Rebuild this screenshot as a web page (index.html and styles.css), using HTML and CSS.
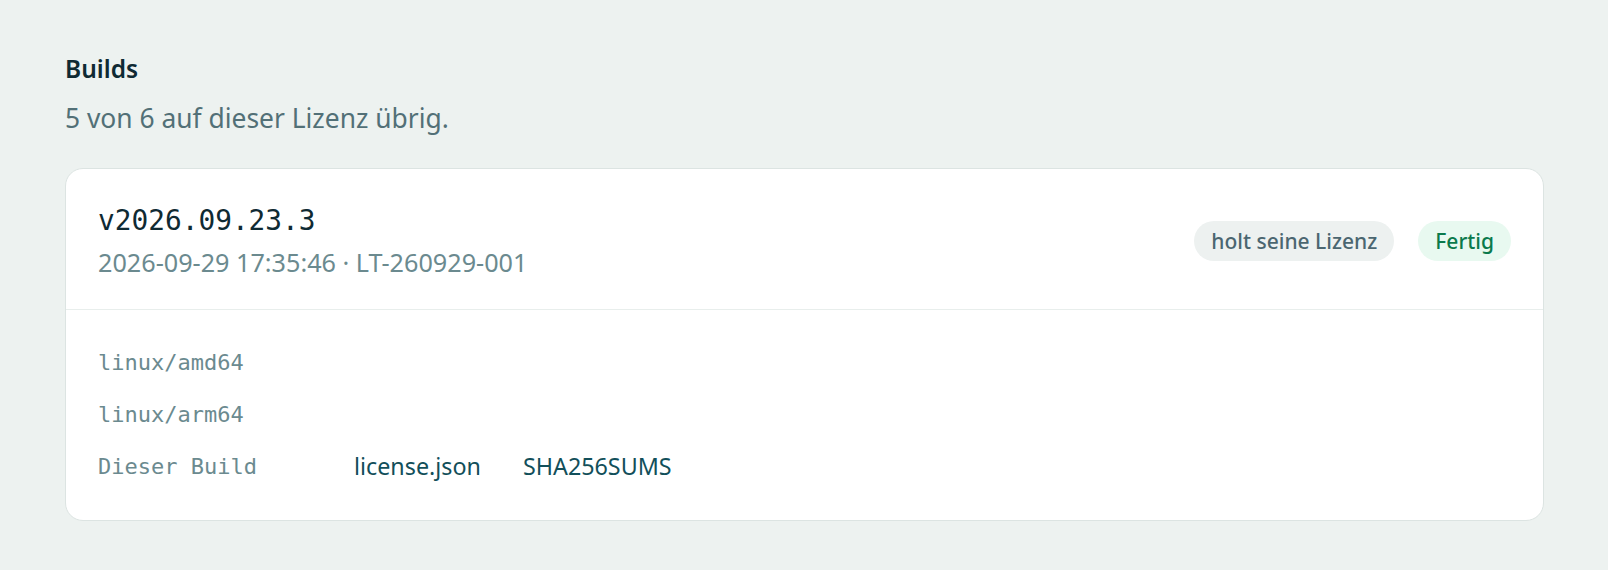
FILE: index.html
```html
<!DOCTYPE html>
<html lang="de">
<head>
<meta charset="utf-8">
<title>Builds</title>
<link rel="stylesheet" href="styles.css">
</head>
<body>
<main class="page">
  <h2 class="heading">Builds</h2>
  <p class="subtitle">5 von 6 auf dieser Lizenz übrig.</p>
  <section class="card">
    <header class="card-head">
      <div class="build-info">
        <div class="version">v2026.09.23.3</div>
        <div class="meta">2026-09-29 17:35:46 · LT-260929-001</div>
      </div>
      <div class="badges">
        <span class="badge badge-muted">holt seine Lizenz</span>
        <span class="badge badge-ok">Fertig</span>
      </div>
    </header>
    <div class="card-body">
      <div class="row"><span class="mono">linux/amd64</span></div>
      <div class="row"><span class="mono">linux/arm64</span></div>
      <div class="row">
        <span class="mono label">Dieser Build</span>
        <span class="links">
          <a class="link" href="#">license.json</a>
          <a class="link" href="#">SHA256SUMS</a>
        </span>
      </div>
    </div>
  </section>
</main>
</body>
</html>
```
FILE: styles.css
```css
html, body {
  margin: 0;
  padding: 0;
  background: #edf2f0;
}
body {
  font-family: "Noto Sans", "Liberation Sans", sans-serif;
  color: #0f2a33;
}
.page {
  padding: 53px 64px 48px 65px;
}
.heading {
  margin: 0;
  font-size: 24.5px;
  line-height: 32px;
  font-weight: 600;
  color: #0f2a33;
}
.subtitle {
  margin: 15px 0 0;
  font-size: 26.4px;
  line-height: 36px;
  color: #527077;
}
.card {
  margin-top: 32px;
  background: #ffffff;
  border: 1px solid #dce4e2;
  border-radius: 18px;
}
.card-head {
  display: flex;
  align-items: center;
  justify-content: space-between;
  padding: 34px 32px 31px;
  border-bottom: 1px solid #e8eeec;
}
.version {
  font-family: "DejaVu Sans Mono", "Liberation Mono", monospace;
  font-size: 27.8px;
  line-height: 36px;
  color: #0f2a33;
}
.meta {
  margin-top: 7px;
  font-size: 25.2px;
  line-height: 32px;
  color: #6b8a8f;
}
.badges {
  display: flex;
  gap: 24px;
}
.badge {
  display: inline-flex;
  align-items: center;
  height: 40px;
  padding: 0 17px;
  border-radius: 20px;
  font-size: 21px;
  font-weight: 500;
}
.badge-muted {
  background: #edf1f0;
  color: #4b6670;
}
.badge-ok {
  background: #e8f9f0;
  color: #0b7a4c;
}
.card-body {
  display: flex;
  flex-direction: column;
  padding: 26px 32px 28px;
}
.row {
  display: flex;
  align-items: center;
  height: 52px;
}
.mono {
  font-family: "DejaVu Sans Mono", "Liberation Mono", monospace;
  font-size: 22px;
  color: #6b8a8f;
}
.label {
  width: 256px;
}
.links {
  display: flex;
  gap: 42px;
}
.link {
  font-size: 23.3px;
  color: #124f5a;
  text-decoration: none;
}
```
